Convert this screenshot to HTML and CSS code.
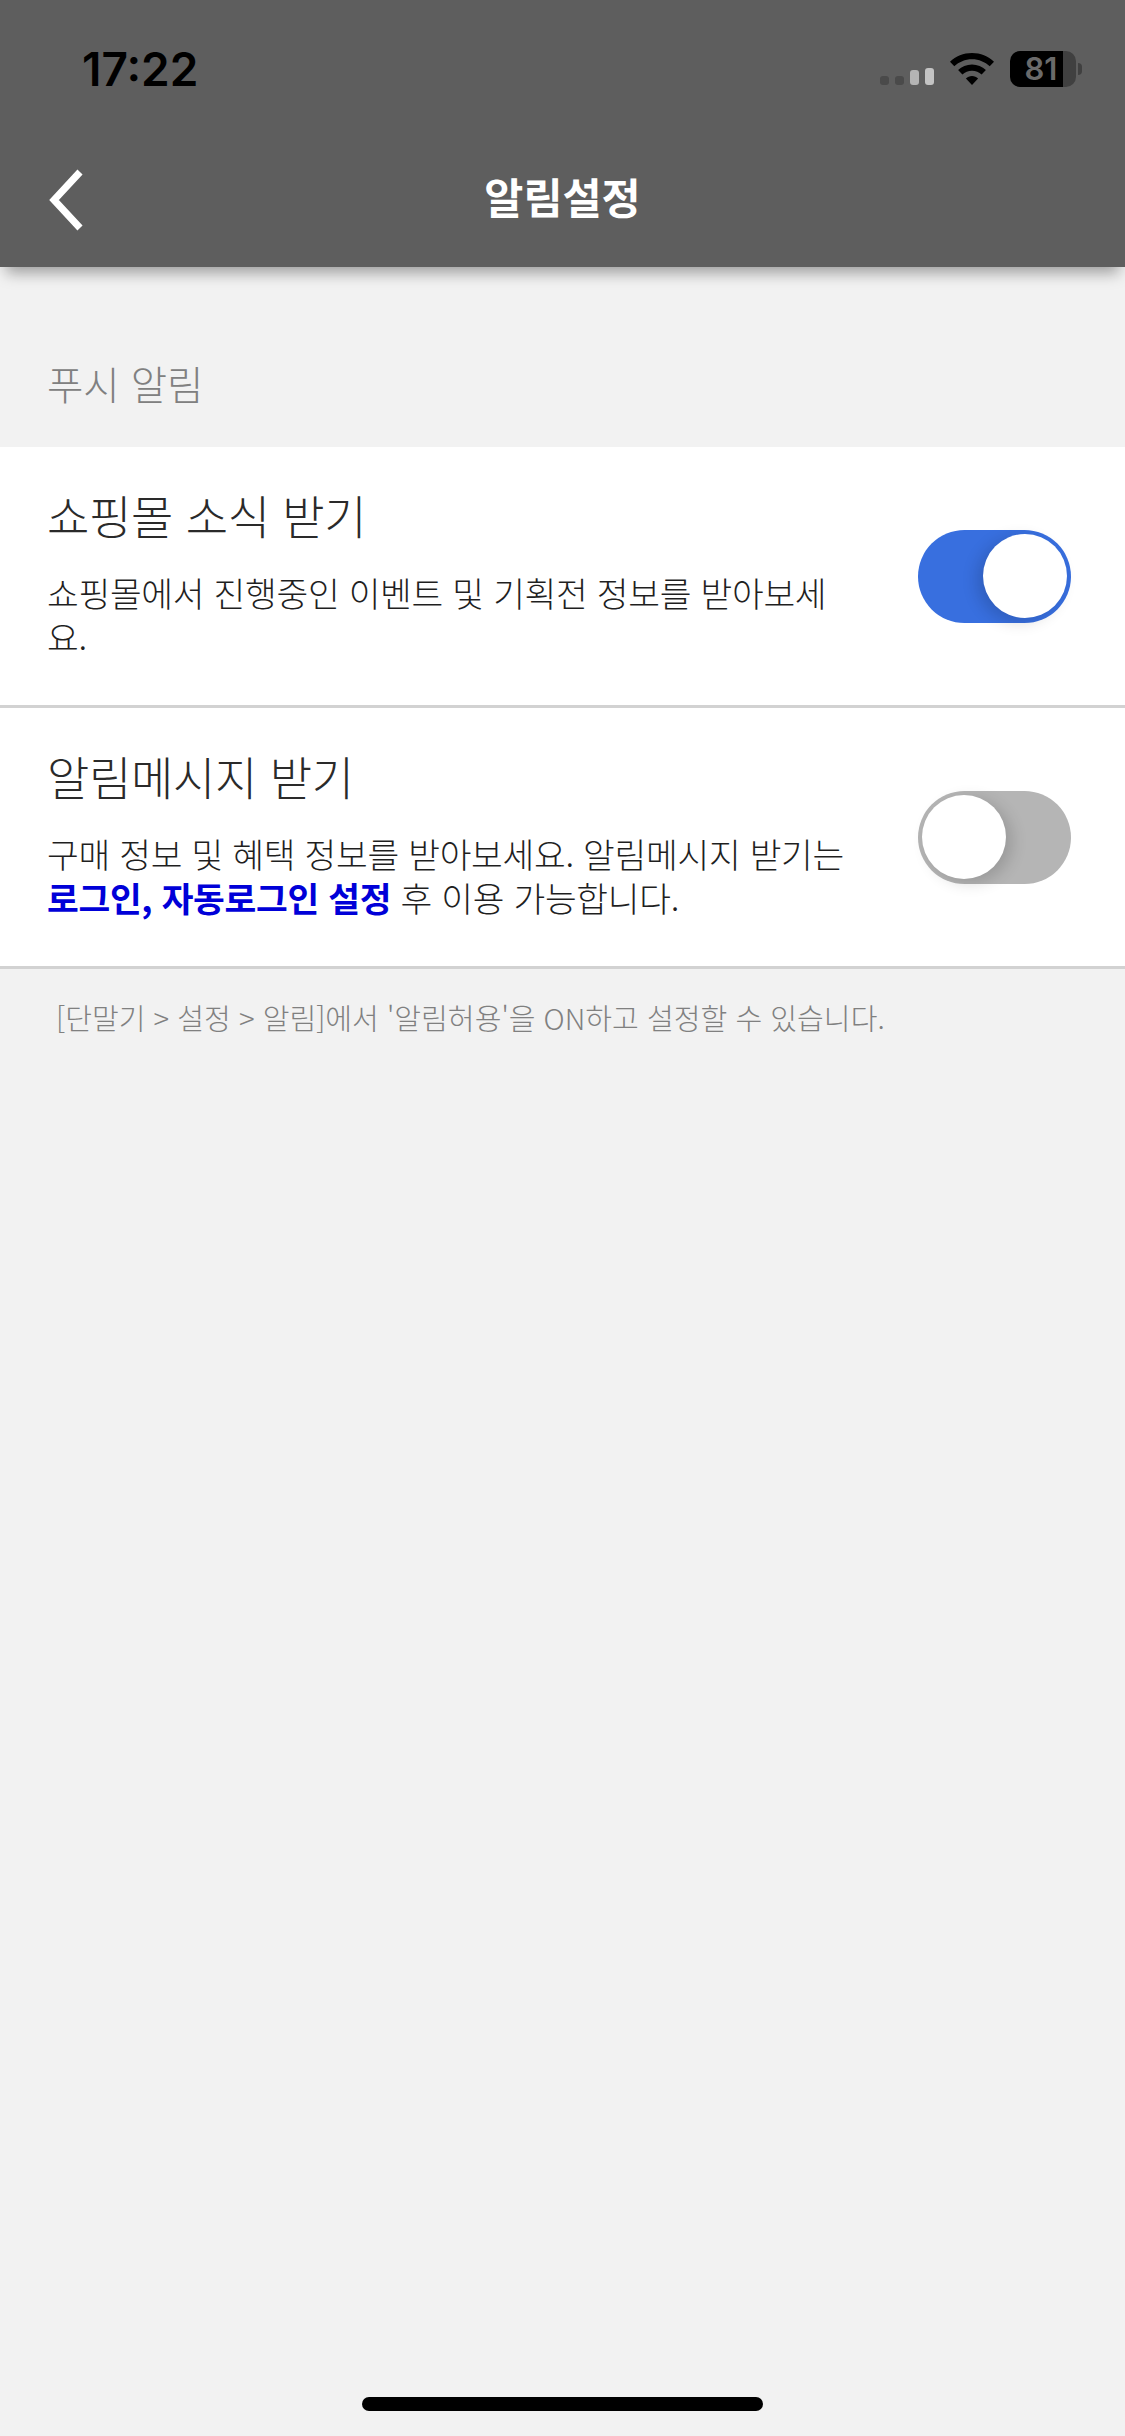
FILE: index.html
```html
<!DOCTYPE html>
<html lang="ko">
<head>
    <meta charset="UTF-8">
    <meta name="viewport" content="width=device-width, initial-scale=1.0">
    <title>알림설정</title>
    <link rel="stylesheet" href="styles.css">
</head>
<body>
    <div class="page">
        <!-- Header -->
        <header class="header">
            <div class="status-bar">
                <span class="time">17:22</span>
                <div class="status-icons">
                    <div class="signal">
                        <span class="bar bar-1"></span>
                        <span class="bar bar-2"></span>
                        <span class="bar bar-3"></span>
                        <span class="bar bar-4"></span>
                    </div>
                    <svg class="wifi" viewBox="0 0 46 34" width="46" height="34">
                        <path d="M23 1C14.500 1 6.800 4.300 1 9.700L5.300 14.200C9.900 9.900 16.100 7.200 23 7.200S36.100 9.900 40.700 14.200L45 9.700C39.200 4.300 31.500 1 23 1Z"/>
                        <path d="M23 12.500C17.600 12.500 12.700 14.600 9.100 18L13.400 22.500C15.900 20.200 19.300 18.700 23 18.700S30.100 20.200 32.600 22.500L36.900 18C33.300 14.600 28.400 12.500 23 12.500Z"/>
                        <path d="M23 24C20.600 24 18.500 24.900 16.900 26.400L23 33L29.100 26.400C27.500 24.900 25.400 24 23 24Z"/>
                    </svg>
                    <div class="battery">
                        <div class="battery-body">
                            <span class="battery-level">81</span>
                        </div>
                        <span class="battery-nub"></span>
                    </div>
                </div>
            </div>
            <div class="nav-bar">
                <a class="back" href="#">
                    <svg viewBox="0 0 40 62" width="40" height="62">
                        <path d="M33 3L7 31L33 59" fill="none" stroke="#fff" stroke-width="7"/>
                    </svg>
                </a>
                <h1 class="nav-title">알림설정</h1>
            </div>
        </header>

        <!-- Settings -->
        <main class="content">
            <h2 class="section-title">푸시 알림</h2>
            <div class="row">
                <div class="row-text">
                    <div class="row-title">쇼핑몰 소식 받기</div>
                    <p class="row-desc">쇼핑몰에서 진행중인 이벤트 및 기획전 정보를 받아보세요.</p>
                </div>
                <div class="toggle on"><span class="knob"></span></div>
            </div>
            <div class="row">
                <div class="row-text">
                    <div class="row-title">알림메시지 받기</div>
                    <p class="row-desc">구매 정보 및 혜택 정보를 받아보세요. 알림메시지 받기는 <strong class="link">로그인, 자동로그인 설정</strong> 후 이용 가능합니다.</p>
                </div>
                <div class="toggle"><span class="knob"></span></div>
            </div>
            <p class="note">[단말기 &gt; 설정 &gt; 알림]에서 '알림허용'을 ON하고 설정할 수 있습니다.</p>
        </main>

        <div class="home-area"><span class="home-bar"></span></div>
    </div>
</body>
</html>
```

FILE: styles.css
```css
* {
    box-sizing: border-box;
}

body {
    margin: 0;
    background: #f2f2f2;
    color: #2a2a2a;
    font-family: "Noto Sans CJK KR", "Noto Sans", sans-serif;
}

.page {
    display: flex;
    flex-direction: column;
    width: 1125px;
    height: 2436px;
    overflow: hidden;
}

/* Header */
.header {
    flex: none;
    height: 267px;
    background: #5e5e5e;
    box-shadow: 0 12px 14px -6px rgba(0, 0, 0, 0.35);
    position: relative;
}

.status-bar {
    display: flex;
    justify-content: space-between;
    align-items: center;
    height: 137px;
    padding: 0 43px 0 82px;
}

.time {
    font-family: Inter, sans-serif;
    font-size: 46px;
    font-weight: 600;
    color: #000;
}

.status-icons {
    display: flex;
    align-items: center;
    gap: 15px;
}

.signal {
    display: flex;
    align-items: flex-end;
    gap: 6px;
    height: 34px;
    padding-bottom: 1px;
}

.bar {
    width: 9px;
    border-radius: 3px;
}

.bar-1,
.bar-2 {
    height: 9px;
    background: #4a4a4a;
}

.bar-3 {
    height: 15px;
    background: #b4b4b4;
}

.bar-4 {
    height: 17px;
    background: #c4c4c4;
}

.wifi {
    fill: #000;
}

.battery {
    display: flex;
    align-items: center;
    gap: 2px;
}

.battery-body {
    width: 66px;
    height: 36px;
    border-radius: 10px;
    background: linear-gradient(to right, #000 80%, #404040 80%);
}

.battery-level {
    display: block;
    width: 56px;
    padding-left: 6px;
    font-family: Inter, sans-serif;
    font-size: 31px;
    font-weight: 600;
    line-height: 36px;
    text-align: center;
    color: #6a6a6a;
}

.battery-nub {
    width: 4px;
    height: 12px;
    border-radius: 0 6px 6px 0;
    background: #404040;
}

.nav-bar {
    display: flex;
    justify-content: center;
    align-items: center;
    height: 130px;
    position: relative;
}

.back {
    position: absolute;
    left: 47px;
    top: 32px;
    line-height: 0;
}

.nav-title {
    margin: 0 0 14px;
    font-size: 42.5px;
    font-weight: 700;
    color: #fff;
}

/* Settings */
.content {
    flex: 1;
}

.section-title {
    display: flex;
    align-items: center;
    height: 180px;
    margin: 0;
    padding: 50px 47px 0;
    font-size: 39.5px;
    font-weight: 300;
    color: #808080;
}

.row {
    display: flex;
    justify-content: space-between;
    align-items: center;
    height: 261px;
    padding: 0 54px 0 47px;
    background: #fff;
    border-bottom: 3px solid #d2d2d2;
}

.row-text {
    width: 803px;
    padding-bottom: 10px;
}

.row-title {
    font-size: 46px;
    font-weight: 300;
    line-height: 60px;
    letter-spacing: -0.3px;
}

.row-desc {
    margin: 26px 0 0;
    font-size: 34.5px;
    font-weight: 300;
    line-height: 44.5px;
    letter-spacing: -0.3px;
    color: #1f1f1f;
}

.link {
    font-weight: 700;
    color: #0000d8;
}

.toggle {
    flex: none;
    display: flex;
    align-items: center;
    width: 153px;
    height: 93px;
    padding: 0 4px;
    border-radius: 47px;
    background: #b5b5b5;
}

.toggle.on {
    justify-content: flex-end;
    background: #386fdf;
}

.knob {
    width: 84px;
    height: 84px;
    border-radius: 50%;
    background: #fff;
    box-shadow: 6px 4px 16px rgba(0, 0, 0, 0.16);
}

.toggle.on .knob {
    box-shadow: -6px 4px 16px rgba(0, 0, 0, 0.16);
}

.note {
    margin: 26px 0 0;
    padding-left: 56px;
    font-size: 29.1px;
    font-weight: 300;
    line-height: 44px;
    color: #808080;
}

/* Home indicator */
.home-area {
    flex: none;
    display: flex;
    justify-content: center;
    height: 39px;
}

.home-bar {
    width: 401px;
    height: 14px;
    border-radius: 7px;
    background: #000;
}
```
